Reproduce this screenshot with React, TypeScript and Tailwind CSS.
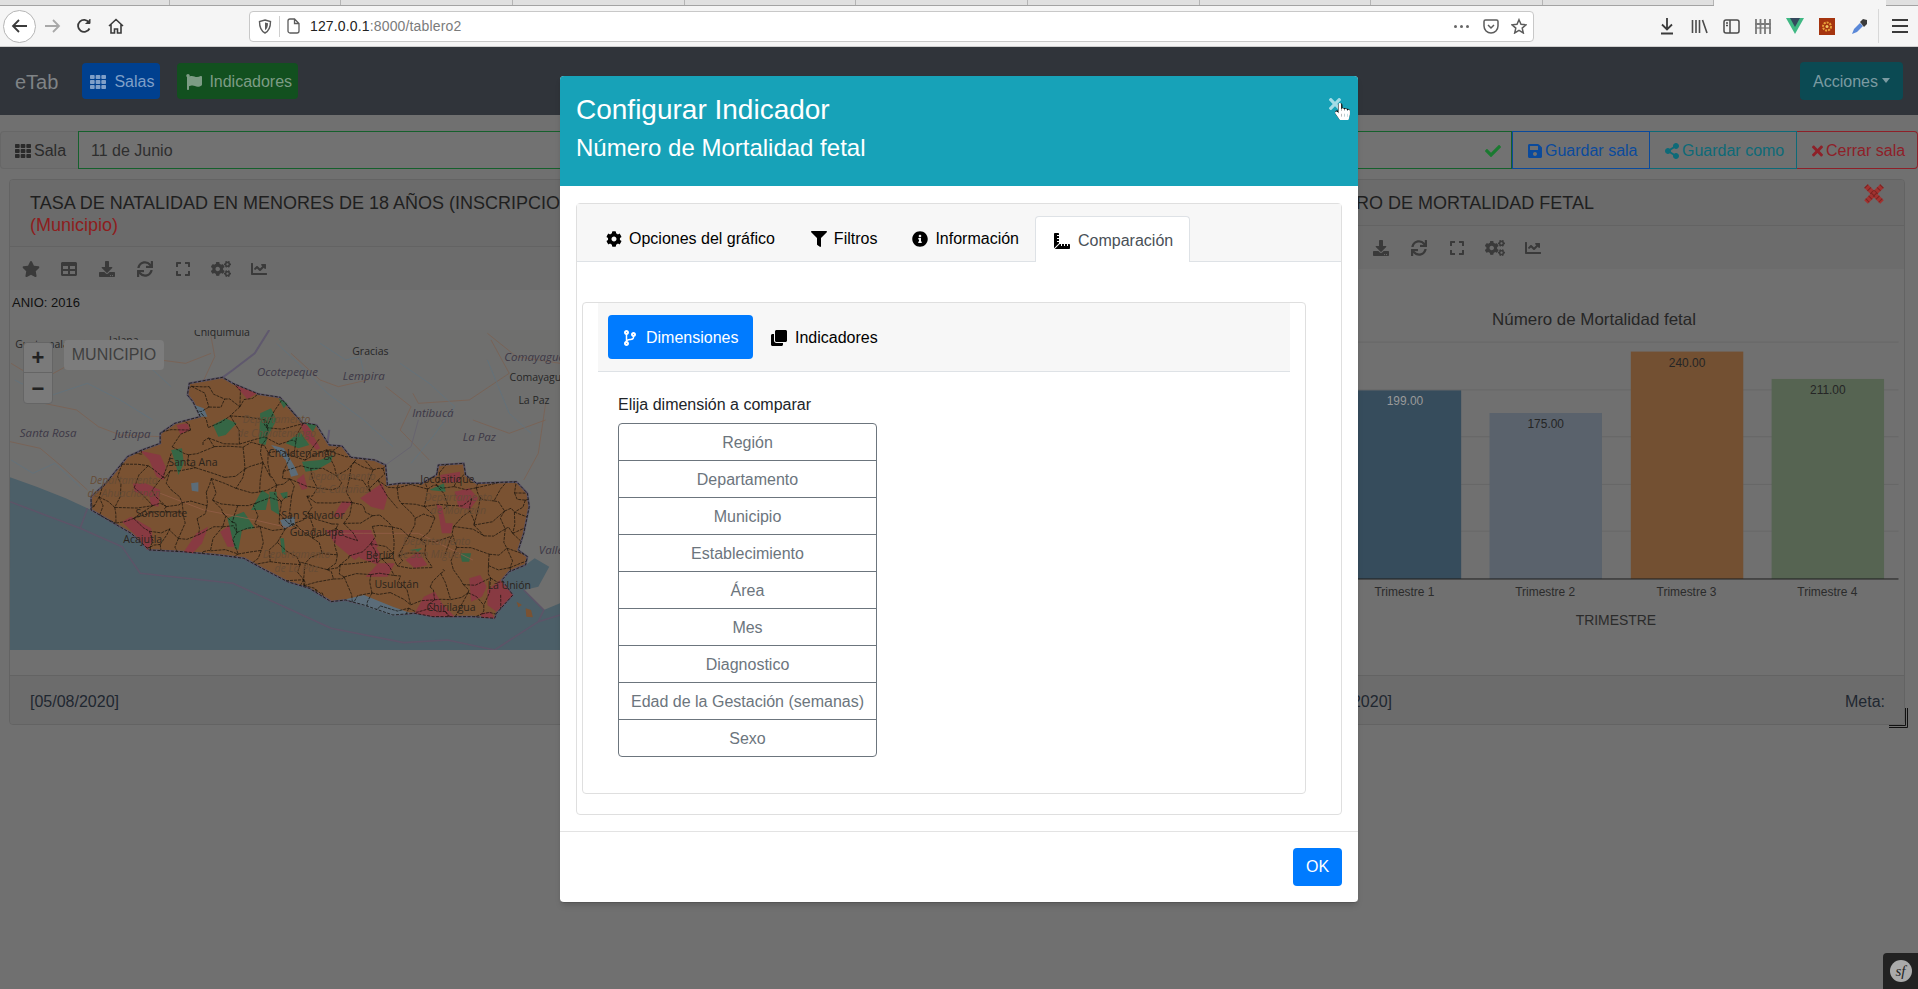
import {
  FaTh, FaFlag, FaCheck, FaSave, FaShareAlt, FaTimes, FaStar, FaTable, FaDownload, FaSync, FaExpand, FaCogs, FaChartLine,
  FaCog, FaFilter, FaInfoCircle, FaRulerCombined, FaCodeBranch, FaClone, FaHandPointer, FaRegHandPointer,
} from "react-icons/fa";

const dimensions = ["Región", "Departamento", "Municipio", "Establecimiento", "Área", "Mes", "Diagnostico", "Edad de la Gestación (semanas)", "Sexo"];
const tabEdges = [170, 171, 172, 172, 171, 172, 172, 171, 172, 171];

const land = "520,190 570,180 612,172 640,190 710,222 770,232 800,270 830,308 870,315 905,375 940,378 965,412 1030,420 1060,435 1065,495 1100,490 1160,490 1200,465 1205,435 1275,430 1280,465 1310,490 1420,485 1450,520 1455,560 1440,640 1425,690 1450,710 1445,735 1400,755 1380,780 1410,825 1365,880 1360,895 1300,890 1190,890 1140,880 1080,885 1000,855 950,840 910,845 850,805 790,785 720,745 670,715 600,705 500,695 410,690 360,640 250,570 250,530 290,490 350,410 390,390 440,370 440,340 480,310 550,290 530,245 515,225";
const sea = "27,472 100,500 180,535 250,570 360,640 410,690 500,695 600,705 670,715 720,745 790,785 850,805 910,845 950,840 1000,855 1080,885 1140,880 1190,890 1300,890 1360,895 1365,880 1410,825 1380,780 1400,755 1445,735 1470,715 1510,740 1480,800 1440,810 1495,870 1540,850 1540,990 27,990";

const reds = [
  "645,195 705,220 680,238", "485,315 515,310 522,330 495,343", "385,392 440,405 455,440 450,480 430,470 410,420",
  "365,490 400,490 440,510 435,560 415,555 410,530 370,515", "335,605 360,590 415,625 420,660 405,690 385,660",
  "505,695 540,640 572,620 555,670 530,700", "605,635 640,610 645,680 625,680", "815,480 835,462 845,505 830,510",
  "825,310 845,315 880,385 870,390 840,355", "915,590 940,545 968,545 940,590", "990,535 1050,490 1065,530 1055,570 1020,560",
  "895,630 1020,630 1040,680 1010,690 975,720 920,670", "980,690 1020,660 1045,700 1040,735 990,715",
  "1005,770 1040,730 1085,730 1065,770 1030,770", "1115,720 1150,695 1175,735 1140,745",
  "1140,880 1165,830 1195,815 1215,850 1250,890 1190,890", "1290,775 1320,765 1338,800 1325,830 1295,845",
  "1340,810 1375,780 1410,825 1365,875 1340,855", "1250,515 1290,505 1315,535 1290,570 1260,560",
  "1210,465 1265,455 1265,485 1215,490", "1200,550 1215,560 1225,610 1245,610 1240,640 1215,640", "1320,880 1350,875 1360,895 1325,893",
];
const greens = [
  "585,315 620,295 650,310 620,345 600,350", "715,280 745,265 760,300 735,350 730,375 712,370", "765,235 790,250 780,265",
  "785,370 825,335 850,375 820,385", "840,310 870,315 860,335", "470,390 500,385 505,430 490,465 482,430",
  "830,425 880,420 915,405 910,425 870,450 840,455", "690,570 720,510 740,525 730,570", "740,515 760,515 768,585 745,570",
  "625,595 670,575 700,625 665,630 655,690 645,685", "770,655 780,655 785,705 775,700", "1180,510 1220,490 1225,515",
  "1265,700 1295,700 1290,725 1270,725", "1125,690 1160,685 1150,695", "770,520 790,515 790,535 778,535",
];
const lakes = [
  "535,255 560,265 570,290 550,290", "745,375 780,385 810,440 820,465 800,470 785,420", "525,490 545,487 545,515 527,512",
  "770,600 810,590 810,615 780,628", "950,838 1000,825 1080,860 1130,880 1080,888 1000,858",
];
const roads = [
  "27,365 110,385 170,440 240,510", "120,250 210,270 270,320 330,345 440,350", "580,50 590,110 560,180", "1135,220 1150,250 1290,240 1400,160 1350,60",
  "1500,250 1480,400 1440,480", "800,100 880,180 930,200 1010,180", "1340,40 1420,110 1540,130", "1060,200 1130,260 1100,330 1180,420",
  "1300,300 1400,340 1500,300", "30,130 60,150 130,170 180,140 230,60", "440,120 510,130 580,100",
];
const rivers = [
  "40,180 130,230 240,190 330,240 420,300", "760,70 820,130 900,220 1000,300 1080,380", "1100,130 1180,190 1250,260 1190,350 1130,430", "30,420 90,460 150,430 220,500",
  "1340,120 1400,280 1460,340", "880,70 950,120 990,110 1000,160", "270,100 330,150 400,130 470,200",
];
const labels: [string, number, number, boolean?][] = [
  ["Chiquimula", 610, 37], ["Jalapa", 340, 60], ["Gracias", 1018, 92], ["Ocotepeque", 790, 155, true], ["Lempira", 1000, 167, true],
  ["Comayagua", 1470, 110, true], ["Comayagua", 1480, 170], ["La Paz", 1468, 240], ["Intibucá", 1190, 280, true], ["La Paz", 1318, 350, true],
  ["Santa Rosa", 132, 338, true], ["Jutiapa", 364, 343, true], ["Valle", 1515, 690, true], ["Guatemala", 115, 72],
];
const townLabels: [string, number, number, boolean?][] = [
  ["Departamento", 760, 298, true], ["de Chalatenango", 760, 340, true], ["Santa Ana", 530, 427], ["Chalatenango", 830, 398],
  ["Departamento", 940, 468, true], ["de Cabañas", 940, 508, true], ["Departamento", 1260, 532, true], ["de Morazán", 1260, 570, true],
  ["Departamento", 340, 480, true], ["de Ahuachapán", 340, 520, true], ["Sonsonate", 443, 578], ["Acajutla", 392, 656],
  ["San Salvador", 860, 585], ["Departamento", 815, 703, true], ["de La Paz", 815, 743, true], ["Guadalupe", 870, 637], ["Usulután", 1090, 792],
  ["Chirilagua", 1240, 860], ["La Unión", 1400, 795], ["Departamento", 1200, 662, true], ["de San Miguel", 1180, 703, true], ["Berlín", 1045, 705], ["Jocoaitique", 1230, 478],
];

// municipal borders: jittered lattice, clipped by the land shape
function rnd(seed: number) {
  const v = Math.sin(seed * 127.1) * 43758.5453;
  return v - Math.floor(v);
}
function municipalPath() {
  const pt = (i: number, j: number): [number, number] => [
    235 + i * 52 + (rnd(i * 31 + j * 7 + 1) - 0.5) * 58,
    160 + j * 48 + (rnd(i * 13 + j * 53 + 2) - 0.5) * 50,
  ];
  const edge = (a: [number, number], b: [number, number], s: number) => {
    const mx = (a[0] + b[0]) / 2 + (rnd(s) - 0.5) * 26;
    const my = (a[1] + b[1]) / 2 + (rnd(s + 3) - 0.5) * 26;
    return `M${a[0]} ${a[1]}L${mx} ${my}L${b[0]} ${b[1]}`;
  };
  let d = "";
  for (let i = 0; i < 24; i++) {
    for (let j = 0; j < 16; j++) {
      const p = pt(i, j);
      if (rnd(i * 3 + j * 11 + 5) > 0.27) d += edge(p, pt(i + 1, j), i * 7 + j * 19 + 4);
      if (rnd(i * 17 + j * 5 + 9) > 0.27) d += edge(p, pt(i, j + 1), i * 23 + j * 3 + 8);
    }
  }
  return d;
}

function MapDrawing() {
  const shape = "translate(-9.8 -10) scale(0.3636 0.3333)";
  const tx = (x: number) => x * 0.3636 - 9.8;
  const ty = (y: number) => y * 0.3333 - 10;
  return (
    <svg viewBox="0 0 550 320" width="550" height="320" className="block">
      <rect width="550" height="320" fill="#6f6f6e" />
      <defs>
        <clipPath id="landClip">
          <polygon points={land} />
        </clipPath>
      </defs>
      <g transform={shape}>
        {roads.map((p) => <polyline key={p} points={p} fill="none" stroke="#7d5f4e" strokeWidth="0.7" vectorEffect="non-scaling-stroke" />)}
        {rivers.map((p) => <polyline key={p} points={p} fill="none" stroke="#5f7280" strokeWidth="0.7" vectorEffect="non-scaling-stroke" />)}
        <polyline points="740,30 700,100 640,150 612,172" fill="none" stroke="#5f586d" strokeWidth="2" vectorEffect="non-scaling-stroke" />
        <polyline points="905,330 900,370" fill="none" stroke="#5f586d" strokeWidth="2" vectorEffect="non-scaling-stroke" />
        <polyline points="1060,435 1130,380 1150,300" fill="none" stroke="#67646f" strokeWidth="1" vectorEffect="non-scaling-stroke" />
        <polygon points={sea} fill="#4c5f68" />
        <polygon points={land} fill="#7a5232" stroke="#5a5468" strokeWidth="2" vectorEffect="non-scaling-stroke" />
        {reds.map((p) => <polygon key={p} points={p} fill="#883a42" />)}
        {greens.map((p) => <polygon key={p} points={p} fill="#356645" />)}
        {lakes.map((p) => <polygon key={p} points={p} fill="#5b6c79" />)}
        <g clipPath="url(#landClip)">
          <polyline points="440,520 560,570 700,600 860,640 1000,640 1150,640 1300,720" fill="none" stroke="#96604a" strokeWidth="0.7" vectorEffect="non-scaling-stroke" />
          <path d={municipalPath()} fill="none" stroke="#14110c" strokeWidth="0.7" strokeDasharray="3 1" vectorEffect="non-scaling-stroke" />
        </g>
        <polygon points={land} fill="none" stroke="#14110c" strokeWidth="0.8" strokeDasharray="3 1.5" vectorEffect="non-scaling-stroke" />
        <polyline points="27,545 220,625 335,680 385,760 640,790 910,925 1110,968 1230,960 1360,990" fill="none" stroke="#5d5468" strokeWidth="1.6" vectorEffect="non-scaling-stroke" />
        <polyline points="220,625 240,565" fill="none" stroke="#5d5468" strokeWidth="1.6" vectorEffect="non-scaling-stroke" />
        <polyline points="1360,990 1480,905 1540,885" fill="none" stroke="#5d5468" strokeWidth="1.6" vectorEffect="non-scaling-stroke" />
        <polyline points="1480,905 1495,870 1440,810" fill="none" stroke="#5d5468" strokeWidth="1.6" vectorEffect="non-scaling-stroke" />
        <polygon points="1420,845 1435,855 1425,862" fill="#7a5232" />
        <polygon points="1445,865 1460,870 1465,892 1447,890" fill="#7a5232" />
      </g>
      {labels.map(([t, x, y, it]) => (
        <text key={t + x} x={tx(x)} y={ty(y) + 4} textAnchor="middle" fontSize={it ? 11.5 : 10.5} fontStyle={it ? "italic" : "normal"} fill={it ? "#3d3846" : "#262626"} fontFamily="'Open Sans', sans-serif">{t}</text>
      ))}
      {townLabels.map(([t, x, y, it]) => (
        <text key={t + x + y} x={tx(x)} y={ty(y) + 4} textAnchor="middle" fontSize="10.5" fontStyle={it ? "italic" : "normal"} fill={it ? "#664c36" : "#2b241c"} fontFamily="'Open Sans', sans-serif">{t}</text>
      ))}
    </svg>
  );
}

function ChartDrawing() {
  const bars = [
    { x: 1347.5, w: 113, top: 390, fill: "#364c5c", label: "199.00", color: "#9a9a9a", name: "Trimestre 1" },
    { x: 1489, w: 113, top: 412.7, fill: "#5a626c", label: "175.00", color: "#252525", name: "Trimestre 2" },
    { x: 1631, w: 113, top: 351, fill: "#735032", label: "240.00", color: "#252525", name: "Trimestre 3" },
    { x: 1772.5, w: 113, top: 378.5, fill: "#566452", label: "211.00", color: "#252525", name: "Trimestre 4" },
  ];
  return (
    <svg viewBox="1283 268 621 408" width="621" height="408" className="block" fontFamily="'Liberation Sans', sans-serif">
      <text x="1594" y="324" textAnchor="middle" fontSize="17" fill="#262626">Número de Mortalidad fetal</text>
      {[341.5, 389.5, 436.5, 484.5, 531.5].map((y) => <line key={y} x1="1300" x2="1900" y1={y} y2={y} stroke="#676767" />)}
      {bars.map((b) => (
        <g key={b.name}>
          <rect x={b.x} y={b.top} width={b.w} height={579.5 - b.top} fill={b.fill} />
          <text x={b.x + b.w / 2} y={b.top + 15} textAnchor="middle" fontSize="12" fill={b.color}>{b.label}</text>
          <text x={b.x + b.w / 2 - 0.5} y="597" textAnchor="middle" fontSize="12" fill="#2b2b2b">{b.name}</text>
        </g>
      ))}
      <line x1="1300" x2="1900" y1="579.5" y2="579.5" stroke="#1f1f1f" />
      <text x="1616" y="626" textAnchor="middle" fontSize="14" fill="#2b2b2b">TRIMESTRE</text>
    </svg>
  );
}

function CardTools({ padLeft }: { padLeft: string }) {
  return (
    <div className={`flex h-[43px] shrink-0 items-center bg-[#6c6c6c] ${padLeft} text-[#3a3a3a]`}>
      <span className="flex w-[38px] justify-center"><FaStar className="h-4 w-[18px]" /></span>
      <span className="flex w-[38px] justify-center"><FaTable className="h-4 w-4" /></span>
      <span className="flex w-[38px] justify-center"><FaDownload className="h-4 w-4" /></span>
      <span className="flex w-[38px] justify-center"><FaSync className="h-4 w-4" /></span>
      <span className="flex w-[38px] justify-center"><FaExpand className="h-4 w-[14px]" /></span>
      <span className="flex w-[38px] justify-center"><FaCogs className="h-4 w-5" /></span>
      <span className="flex w-[38px] justify-center"><FaChartLine className="h-4 w-4" /></span>
    </div>
  );
}

function BrowserBar() {
  const box = "flex h-8 w-8 items-center justify-center";
  return (
    <div className="shrink-0">
      <div className="flex h-[6px] border-b border-[#a3a3a3] bg-[#e0e0e0]">
        {tabEdges.map((w, i) => <div key={i} className="h-full border-r border-[#b5b5b5]" style={{ width: w }} />)}
        <div className="-mb-px h-[6px] w-[172px] bg-[#f5f5f5]" />
      </div>
      <div className="flex h-[41px] items-center border-b border-[#cfcfcf] bg-[#f5f5f5] pl-[3px]">
        <div className="flex h-[33px] w-[33px] items-center justify-center rounded-full border border-[#b5b5b5] bg-white">
          <svg width="17" height="16" viewBox="0 0 17 16" fill="none" stroke="#3b3b3b" strokeWidth="1.8"><path d="M16 8H2M8 2L2 8l6 6" /></svg>
        </div>
        <div className={box}>
          <svg width="17" height="16" viewBox="0 0 17 16" fill="none" stroke="#a8a8a8" strokeWidth="1.8"><path d="M1 8h14M9 2l6 6-6 6" /></svg>
        </div>
        <div className={box}>
          <svg width="16" height="16" viewBox="0 0 16 16" fill="none" stroke="#3b3b3b" strokeWidth="1.8"><path d="M13.5 10.5A6 6 0 1 1 13 4.5" /><path d="M14 1v4.5H9.5" fill="#3b3b3b" strokeWidth="1" /></svg>
        </div>
        <div className={box}>
          <svg width="16" height="16" viewBox="0 0 16 16" fill="none" stroke="#3b3b3b" strokeWidth="1.6"><path d="M1 8l7-6.5L15 8M3 6.5V15h3.5v-4h3v4H13V6.5" /></svg>
        </div>
        <div className="ml-[117px] flex h-[31px] w-[1285px] items-center rounded border border-[#c8c8c8] bg-white text-[14px] font-['Liberation_Sans',sans-serif]">
          <span className="flex w-[29px] justify-center">
            <svg width="14" height="15" viewBox="0 0 14 15" fill="none" stroke="#5c5c5c" strokeWidth="1.4"><path d="M7 1l5.5 1.5c0 6-1.5 9.5-5.5 11.5C3 12 1.500 8.500 1.500 2.500z" /><path d="M7 3.500l3 .8c0 3.500-.8 5.500-3 7z" fill="#5c5c5c" stroke="none" /></svg>
          </span>
          <span className="h-[21px] w-px bg-[#cfcfcf]" />
          <span className="flex w-[27px] justify-center">
            <svg width="13" height="16" viewBox="0 0 13 16" fill="none" stroke="#5c5c5c" strokeWidth="1.300"><path d="M1 3a2 2 0 0 1 2-2h4.500L12 5.500V13a2 2 0 0 1-2 2H3a2 2 0 0 1-2-2zM7.500 1v4.500H12" /></svg>
          </span>
          <span className="ml-[3px] tracking-[0.15px] text-[#222]">127.0.0.1<span className="text-[#7b7b7b]">:8000/tablero2</span></span>
          <span className="ml-auto flex items-center gap-[3px]">
            <i className="h-[3px] w-[3px] rounded-full bg-[#666]" /><i className="h-[3px] w-[3px] rounded-full bg-[#666]" /><i className="h-[3px] w-[3px] rounded-full bg-[#666]" />
          </span>
          <span className="ml-[14px] flex w-[16px] justify-center">
            <svg width="16" height="15" viewBox="0 0 16 15" fill="none" stroke="#5c5c5c" strokeWidth="1.5"><path d="M1 2.500A1.500 1.500 0 0 1 2.500 1h11A1.500 1.500 0 0 1 15 2.500V7a7 7 0 0 1-14 0z" /><path d="M5 6l3 3 3-3" /></svg>
          </span>
          <span className="ml-[12px] mr-[6px] flex w-[16px] justify-center">
            <svg width="17" height="16" viewBox="0 0 24 23" fill="none" stroke="#5c5c5c" strokeWidth="2.200"><path d="M12 2l3 7 7.500.7-5.700 5 1.700 7.300L12 18.200 5.500 22l1.700-7.300-5.700-5L9 9z" /></svg>
          </span>
        </div>
        <div className="ml-[117px] flex items-center">
          <div className={box}>
            <svg width="16" height="18" viewBox="0 0 16 18" fill="none" stroke="#3b3b3b" strokeWidth="1.800"><path d="M8 1v11M3 7.500L8 12.500l5-5M2 16.500h12" /></svg>
          </div>
          <div className={box}>
            <svg width="17" height="15" viewBox="0 0 17 15" fill="none" stroke="#4b4b4b" strokeWidth="1.600"><path d="M1.500 1v13M5 1v13M8.500 1v13M11.500 1l4.500 13" /></svg>
          </div>
          <div className={box}>
            <svg width="17" height="15" viewBox="0 0 17 15" fill="none" stroke="#4b4b4b" strokeWidth="1.500"><rect x="1" y="1" width="15" height="13" rx="2" /><path d="M7 1v13" /><path d="M3 4h2M3 6.500h2" /></svg>
          </div>
          <div className={box}>
            <svg width="16" height="15" viewBox="0 0 16 15" fill="none" stroke="#7a7a7a" strokeWidth="1.800"><path d="M1 0v15M5.500 0v15M10 0v15M15 0v15M0 5h16" /><path d="M0 9h16" strokeWidth="1.200" /></svg>
          </div>
          <div className={box}>
            <svg width="18" height="16" viewBox="0 0 18 16"><path d="M0 0h18L9 16z" fill="#3fb883" /><path d="M4 0h10L9 9z" fill="#35495e" /></svg>
          </div>
          <div className={box}>
            <svg width="16" height="17" viewBox="0 0 16 17"><rect width="16" height="17" fill="#a5340f" /><circle cx="8" cy="8.500" r="4" fill="none" stroke="#e9a13a" strokeWidth="2" strokeDasharray="2 1" /><circle cx="8" cy="8.500" r="1.500" fill="#f1c661" /></svg>
          </div>
          <div className={box}>
            <svg width="17" height="17" viewBox="0 0 17 17"><path d="M1 16l2-5 6-6 3 3-6 6z" fill="#5a88d8" /><path d="M9 4l3-3 4 1 0 4-3 3z" fill="#3b3b3b" /></svg>
          </div>
        </div>
        <span className="ml-[3px] h-[34px] w-px bg-[#d8d8d8]" />
        <div className="ml-[13px] flex w-[16px] flex-col gap-[4px]">
          <i className="h-[2px] bg-[#3b3b3b]" /><i className="h-[2px] bg-[#3b3b3b]" /><i className="h-[2px] bg-[#3b3b3b]" />
        </div>
      </div>
    </div>
  );
}

function ConfigModal() {
  const tabs = [
    { icon: FaCog, label: "Opciones del gráfico", pad: "pr-[18px]" },
    { icon: FaFilter, label: "Filtros", pad: "pr-[17px]" },
    { icon: FaInfoCircle, label: "Información", pad: "pr-[16px]" },
  ];
  return (
    <div className="absolute left-[560px] top-[76px] flex h-[827px] w-[798px] flex-col overflow-hidden rounded border-b border-[#555] bg-white font-['Liberation_Sans',sans-serif] shadow-md">
      <div className="relative h-[110px] shrink-0 bg-[#17a2b8] pl-4 pt-4 text-white">
        <h3 className="text-[28px] leading-[36px]">Configurar Indicador</h3>
        <h4 className="mt-[4px] text-[24px] leading-[32px]">Número de Mortalidad fetal</h4>
        <FaTimes className="absolute left-[769px] top-[19px] h-[18px] w-[12px] text-[#a5dce6]" />
        <span className="absolute left-[775px] top-[27px]">
          <FaHandPointer className="absolute h-[17px] w-[15px] text-white" />
          <FaRegHandPointer className="h-[17px] w-[15px] text-black" />
        </span>
      </div>
      <div className="flex-1 px-4 pt-[17px]">
        <div className="h-[612px] rounded border border-[#dfdfdf]">
          <div className="flex h-[58px] items-end border-b border-[#dee2e6] bg-[#f7f7f7] pl-[11px] text-[16px]">
            {tabs.map((t) => (
              <div key={t.label} className={`flex h-[46px] items-center gap-[7px] pl-[18px] pt-[2px] text-black ${t.pad}`}>
                <t.icon className="h-4 w-4" />
                {t.label}
              </div>
            ))}
            <div className="-mb-px flex h-[46px] items-center gap-[8px] rounded-t border border-b-0 border-[#dee2e6] bg-white pl-[18px] pr-[16px] pt-[2px] text-[#495057]">
              <FaRulerCombined className="h-4 w-4 text-black" />
              Comparación
            </div>
          </div>
          <div className="px-[5px] pt-10">
            <div className="h-[492px] w-[724px] rounded border border-[#dfdfdf] px-[15px]">
              <div className="flex h-[69px] items-start border-b border-[#dee2e6] bg-[#f7f7f7] pl-[10px] pt-[12px] text-[16px]">
                <div className="flex h-[44px] w-[145px] items-center gap-[10px] rounded bg-[#007bff] pl-4 pt-px text-white">
                  <FaCodeBranch className="h-4 w-3" />
                  Dimensiones
                </div>
                <div className="flex h-[44px] items-center gap-[8px] pl-[18px] pt-px text-black">
                  <FaClone className="h-4 w-4" />
                  Indicadores
                </div>
              </div>
              <div className="pl-[20px] pt-[23px]">
                <p className="h-[28px] text-[16px] leading-[20px] text-[#212529]">Elija dimensión a comparar</p>
                <div className="flex w-[259px] flex-col overflow-hidden rounded border border-[#6c757d]">
                  {dimensions.map((d, i) => (
                    <div key={d} className={`flex items-center justify-center pt-px text-[16px] text-[#6c757d] ${i ? "h-[37px] border-t border-[#6c757d]" : "h-9"}`}>{d}</div>
                  ))}
                </div>
              </div>
            </div>
          </div>
        </div>
      </div>
      <div className="flex h-[71px] shrink-0 items-start justify-end border-t border-[#e3e3e3] pr-4 pt-[16px]">
        <button className="h-[38px] w-[49px] rounded bg-[#007bff] text-[16px] text-white">OK</button>
      </div>
    </div>
  );
}

export default function App() {
  return (
    <div className="relative flex h-screen w-full flex-col overflow-hidden bg-[#707070] font-['Liberation_Sans',sans-serif]">
      <BrowserBar />

      <nav className="flex h-[68px] shrink-0 items-center bg-[#30343a] pl-[15px] pr-[15px]">
        <span className="mr-[24px] pt-px text-[20px] text-[#7f8386]">eTab</span>
        <div className="flex h-9 w-[78px] items-center gap-[8px] rounded bg-[#00408f] pl-[8px] pt-px text-[16px] text-[#7f9fc8]">
          <FaTh className="h-4 w-4" />
          Salas
        </div>
        <div className="ml-[17px] flex h-9 w-[121px] items-center gap-[7px] rounded bg-[#12501f] pl-[9px] pt-px text-[16px] text-[#7d9c85]">
          <FaFlag className="h-4 w-4" />
          Indicadores
        </div>
        <div className="ml-auto flex h-[38px] w-[103px] items-center justify-center gap-[4px] rounded bg-[#0b4a53] pt-px text-[16px] text-[#7b9ba2]">
          Acciones
          <span className="mb-[2px] border-x-[4.500px] border-t-[5px] border-x-transparent border-t-[#7b9ba2]" />
        </div>
      </nav>

      <div className="mt-4 flex h-[38px] shrink-0 text-[16px]">
        <div className="flex w-[78px] items-center gap-[3px] rounded-l border border-r-0 border-[#676767] bg-[#6e6e6e] pl-[14px] pt-px text-[#2a2a2a]">
          <FaTh className="h-4 w-4" />
          Sala
        </div>
        <div className="flex flex-1 items-center border border-[#15602c] bg-[#727272] pl-3 pr-[10px] pt-px text-[#2e2e2e]">
          11 de Junio
          <FaCheck className="ml-auto h-4 w-4 text-[#1a7a30]" />
        </div>
        <div className="flex w-[138px] items-center gap-[3px] border border-[#0a4a9c] pl-[15px] pt-px text-[#0b4a9c]">
          <FaSave className="h-4 w-[14px]" />
          Guardar sala
        </div>
        <div className="flex w-[147px] items-center gap-[3px] border-y border-r border-[#0d6a78] pl-[15px] pt-px text-[#0d6a78]">
          <FaShareAlt className="h-4 w-[14px]" />
          Guardar como
        </div>
        <div className="flex w-[121px] items-center gap-[3px] rounded-r border-y border-r border-[#8e2028] pl-[15px] pt-px text-[#8e2028]">
          <FaTimes className="h-4 w-[11px]" />
          Cerrar sala
        </div>
      </div>

      <div className="mt-[10px] grid h-[546px] shrink-0 grid-cols-[1263px_623px] gap-[10px] pl-[9px]">
        <section className="flex flex-col overflow-hidden rounded border border-[#636363] text-[#1f1f1f]">
          <header className="h-[67px] shrink-0 border-b border-[#636363] bg-[#6b6b6b] pl-[20px] pt-[12px] text-[18px] leading-[22px] whitespace-nowrap">
            <div>TASA DE NATALIDAD EN MENORES DE 18 AÑOS (INSCRIPCION EN REGISTRO CIVIL)</div>
            <div className="text-[#8e1d1d]">(Municipio)</div>
          </header>
          <CardTools padLeft="pl-[2px]" />
          <div className="flex h-10 shrink-0 items-start pl-[2px] pt-[3px] text-[13px] text-[#111]">ANIO: 2016</div>
          <div className="relative h-[320px] shrink-0">
            <MapDrawing />
            <div className="absolute left-[13px] top-[12px] flex w-[30px] flex-col rounded border border-[#656565] bg-[#7a7a7a] text-[#222]">
              <span className="flex h-[30px] items-center justify-center border-b border-[#656565] text-[22px] font-bold">+</span>
              <span className="flex h-[30px] items-center justify-center text-[22px] font-bold">−</span>
            </div>
            <div className="absolute left-[54px] top-[10px] flex h-[30px] w-[100px] items-center justify-center rounded bg-[#7c7c7c] text-[16px] text-[#3f3f3f]">MUNICIPIO</div>
          </div>
          <div className="flex-1" />
          <footer className="flex h-[49px] shrink-0 items-center border-t border-[#636363] bg-[#6c6c6c] pl-[20px] pt-[3px] text-[16px] text-[#1f2730]">[05/08/2020]</footer>
        </section>

        <section className="relative flex flex-col overflow-hidden rounded border border-[#636363] text-[#1f1f1f]">
          <header className="h-[46px] shrink-0 border-b border-[#636363] bg-[#6b6b6b] pl-[20px] pt-[12px] text-[18px] leading-[22px] whitespace-nowrap">NÚMERO DE MORTALIDAD FETAL</header>
          <CardTools padLeft="pl-[3px]" />
          <ChartDrawing />
          <footer className="flex h-[49px] shrink-0 items-center justify-between border-t border-[#636363] bg-[#6c6c6c] pl-[20px] pr-[19px] pt-[3px] text-[16px] text-[#1f2730]">
            <span>[05/08/2020]</span>
            <span>Meta:</span>
          </footer>
          <svg className="absolute right-[19px] top-[3px]" width="22" height="22" viewBox="0 0 22 22">
            <path d="M3 3l16 16M19 3L3 19" stroke="#a23230" strokeWidth="5" />
            <path d="M3 3l16 16M19 3L3 19" stroke="#7a2422" strokeWidth="5" strokeDasharray="1 3" />
          </svg>
        </section>
      </div>

      <svg className="absolute left-[1889px] top-[708px]" width="20" height="21" viewBox="0 0 20 21" fill="none" stroke="#111">
        <path d="M0 19.500h18.500V0" strokeWidth="1" />
        <path d="M0 17.500h16.500V0" strokeWidth="1" />
      </svg>

      <ConfigModal />

      <div className="absolute bottom-0 right-0 flex h-9 w-[35px] items-center justify-center rounded-tl bg-[#222]">
        <span className="flex h-[22px] w-[22px] items-center justify-center rounded-full bg-[#aaa] font-['Liberation_Serif',serif] text-[15px] italic text-[#222]">sf</span>
      </div>
    </div>
  );
}
